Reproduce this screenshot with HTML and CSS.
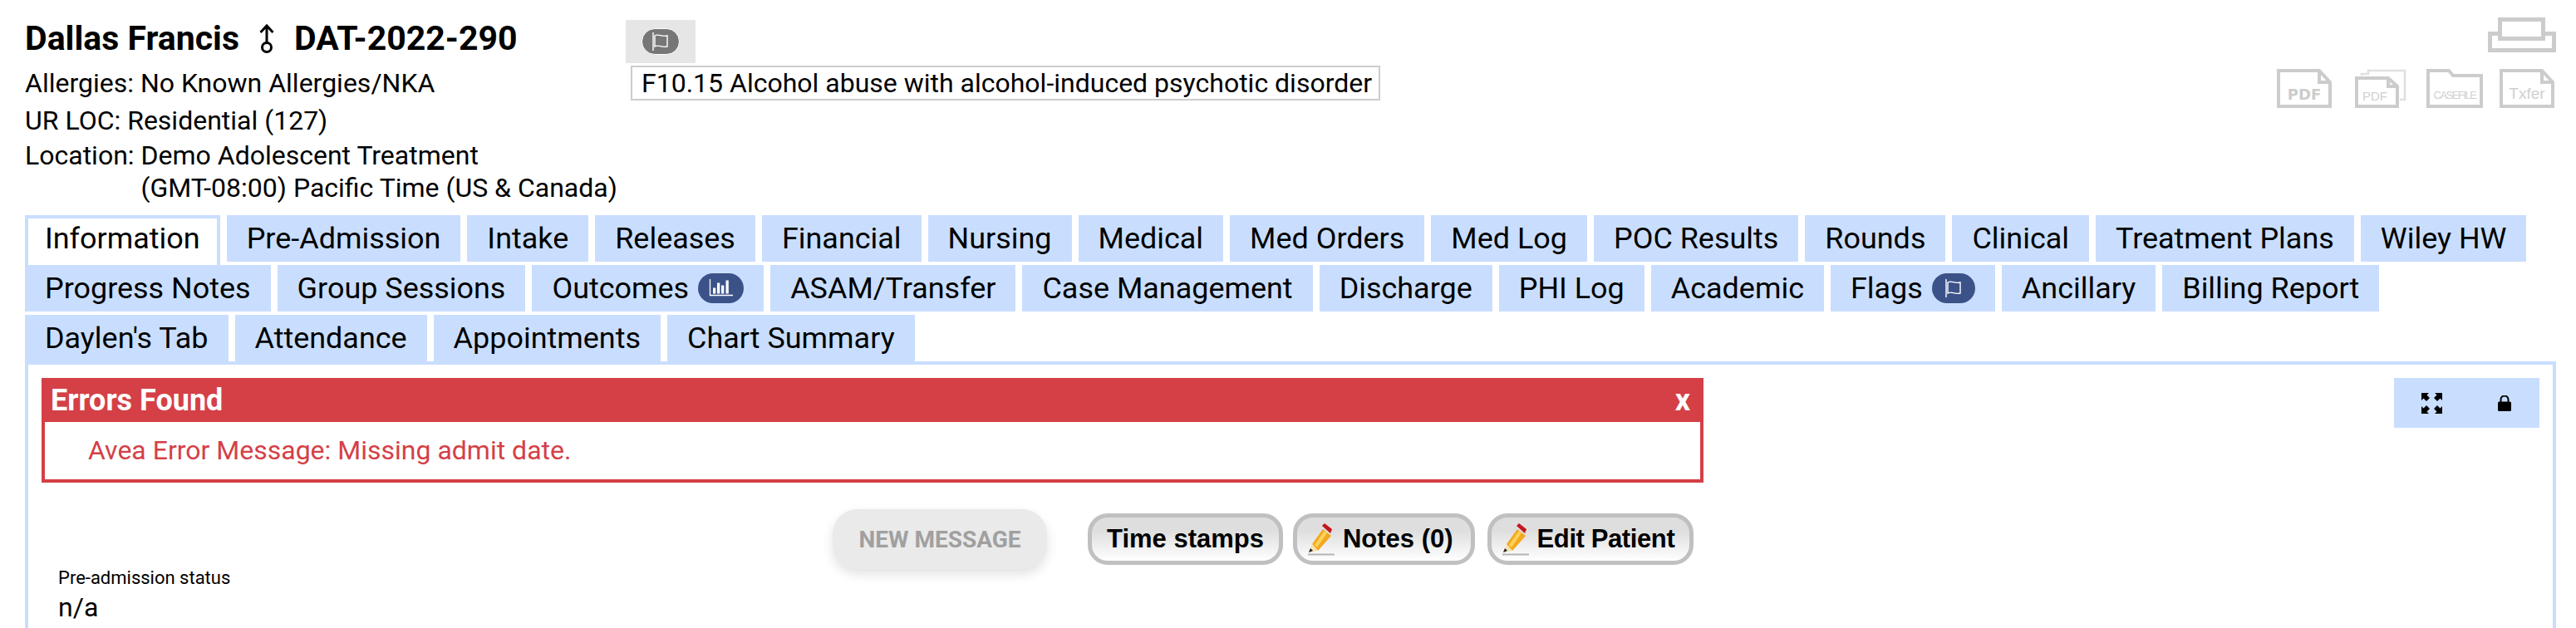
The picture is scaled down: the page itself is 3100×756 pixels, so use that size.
FILE: index.html
```html
<!DOCTYPE html>
<html>
<head>
    <title>Dallas Francis DAT-2022-290</title>
    <link rel="stylesheet" href="styles.css">
</head>
<body>

    <div class="patient-header">
        <div class="patient-info">
            <h1>Dallas Francis
                <svg class="gender" viewBox="0 0 20 36"><path d="M10 24V3M2.500 11L10 3l7.500 8" fill="none" stroke="#000" stroke-width="3"/><circle cx="10" cy="29" r="5.500" fill="none" stroke="#000" stroke-width="3"/></svg>
                DAT-2022-290</h1>
            <p>Allergies: No Known Allergies/NKA</p>
            <p>UR LOC: Residential (127)</p>
            <div class="location">
                <span class="location-label">Location:</span>
                <span>Demo Adolescent Treatment<br>(GMT-08:00) Pacific Time (US &amp; Canada)</span>
            </div>
        </div>

        <div class="flags-col">
            <div class="flag-btn">
                <span class="pill pill-grey">
                    <svg viewBox="0 0 26 26"><path d="M4 2v22M6 6c5-3 8 2 15 0v13c-7 2-10-3-15 0z" fill="none" stroke="#fff" stroke-width="1.400"/></svg>
                </span>
            </div>
            <div class="diagnosis">F10.15 Alcohol abuse with alcohol-induced psychotic disorder</div>
        </div>

        <div class="doc-icons">
            <svg class="print-icon" viewBox="0 0 82 44"><path d="M14.500 3.500h52v23h-52zM12 20.500H2.500v20h77v-20H69" fill="none" stroke="#ccc" stroke-width="5"/></svg>
            <div class="doc-row">
                <svg width="66" height="47" viewBox="0 0 66 47"><path d="M2 2h49l13 14v29H2zM51 2v14h13" fill="none" stroke="#ccc" stroke-width="4"/><text x="33" y="37" text-anchor="middle" class="doc-text doc-bold">PDF</text></svg>
                <svg class="doc-stack" width="62" height="47" viewBox="0 0 62 47"><path d="M8 8V6h8V2h44v35h-6" fill="none" stroke="#e0e0e0" stroke-width="2.500"/><path d="M2 11h38l11 10v24H2zM40 11v10h11" fill="none" stroke="#ccc" stroke-width="4"/><text x="9" y="38" class="doc-text doc-small">PDF</text></svg>
                <svg width="68" height="47" viewBox="0 0 68 47"><path d="M2 2h25l5 6h34v37H2z" fill="none" stroke="#ccc" stroke-width="4"/><text x="34" y="36" text-anchor="middle" class="doc-text doc-tiny">CASEFILE</text></svg>
                <svg class="doc-last" width="66" height="47" viewBox="0 0 66 47"><path d="M2 2h49l13 14v29H2zM51 2v14h13" fill="none" stroke="#ccc" stroke-width="4"/><text x="33" y="36" text-anchor="middle" class="doc-text doc-txfer">Txfer</text></svg>
            </div>
        </div>
    </div>

    <div class="tabs">
        <a class="tab active">Information</a>
        <a class="tab">Pre-Admission</a>
        <a class="tab">Intake</a>
        <a class="tab">Releases</a>
        <a class="tab">Financial</a>
        <a class="tab">Nursing</a>
        <a class="tab">Medical</a>
        <a class="tab">Med Orders</a>
        <a class="tab">Med Log</a>
        <a class="tab">POC Results</a>
        <a class="tab">Rounds</a>
        <a class="tab">Clinical</a>
        <a class="tab">Treatment Plans</a>
        <a class="tab">Wiley HW</a>
        <a class="tab">Progress Notes</a>
        <a class="tab">Group Sessions</a>
        <a class="tab">Outcomes
            <span class="pill pill-blue pill-wide">
                <svg class="chart" viewBox="0 0 30 22"><path d="M1.500 0v19.500H29" fill="none" stroke="#fff" stroke-width="1.300"/><path d="M5 10.500h3.300v7H5zM10 4.500h3.300v13H10zM15 7.500h3.300v10H15zM20.500 1.500h3.300v16h-3.300z" fill="#fff"/></svg>
            </span>
        </a>
        <a class="tab">ASAM/Transfer</a>
        <a class="tab">Case Management</a>
        <a class="tab">Discharge</a>
        <a class="tab">PHI Log</a>
        <a class="tab">Academic</a>
        <a class="tab">Flags
            <span class="pill pill-blue">
                <svg viewBox="0 0 26 26"><path d="M4 2v22M6 6c5-3 8 2 15 0v13c-7 2-10-3-15 0z" fill="none" stroke="#fff" stroke-width="1.400"/></svg>
            </span>
        </a>
        <a class="tab">Ancillary</a>
        <a class="tab">Billing Report</a>
        <a class="tab">Daylen's Tab</a>
        <a class="tab">Attendance</a>
        <a class="tab">Appointments</a>
        <a class="tab">Chart Summary</a>
    </div>

    <div class="panel">
        <div class="panel-top">
            <div class="error-box">
                <div class="error-title"><span>Errors Found</span><span class="error-close">x</span></div>
                <div class="error-msg">Avea Error Message: Missing admit date.</div>
            </div>
            <div class="panel-tools">
                <svg width="25" height="25" viewBox="0 0 25 25"><path d="M0 0h9L6.500 2.500 10 6 6 10 2.500 6.500 0 9zM25 0v9L22.500 6.500 19 10 15 6l3.500-3.500L16 0zM0 25v-9l2.500 2.500L6 15l4 4-3.500 3.500L9 25zM25 25h-9l2.500-2.500L15 19l4-4 3.500 3.500L25 16z"/></svg>
                <svg width="16" height="19" viewBox="0 0 16 19"><path d="M3.500 8V5a4.500 4.500 0 0 1 9 0v3" fill="none" stroke="#000" stroke-width="2"/><rect x="0" y="7.500" width="16" height="11.500" rx="1.500"/></svg>
            </div>
        </div>

        <div class="actions">
            <button class="new-message" type="button">NEW MESSAGE</button>
            <div class="action-group">
                <button class="action-btn" type="button">Time stamps</button>
                <button class="action-btn has-pencil notes-btn" type="button">
                    <svg width="32" height="42" viewBox="0 0 32 42"><path d="M0 39.500h32" stroke="#b5b5b5" stroke-width="2"/><path d="M5 27L18 9l10 8-16 18z" fill="#f4a81f"/><path d="M8 28L20 11l3 2.500L11 31z" fill="#fcd35a"/><path d="M1 37l4-10 7 8z" fill="#f7e2b0"/><path d="M1 37l2-5 3 3z" fill="#222"/><path d="M17 5l3-3 9 7-2 5z" fill="#c4161c"/></svg>
                    Notes (0)
                </button>
                <button class="action-btn has-pencil edit-btn" type="button">
                    <svg width="32" height="42" viewBox="0 0 32 42"><path d="M0 39.500h32" stroke="#b5b5b5" stroke-width="2"/><path d="M5 27L18 9l10 8-16 18z" fill="#f4a81f"/><path d="M8 28L20 11l3 2.500L11 31z" fill="#fcd35a"/><path d="M1 37l4-10 7 8z" fill="#f7e2b0"/><path d="M1 37l2-5 3 3z" fill="#222"/><path d="M17 5l3-3 9 7-2 5z" fill="#c4161c"/></svg>
                    Edit Patient
                </button>
            </div>
        </div>

        <div class="field">
            <label>Pre-admission status</label>
            <div class="field-value">n/a</div>
        </div>
    </div>

</body>
</html>
```

FILE: styles.css
```css
body {
    margin: 0;
    font-family: Roboto, sans-serif;
    font-size: 32px;
    color: #000;
    background: #fff;
    overflow: hidden;
}
p { margin: 0; }

.patient-header {
    display: flex;
    height: 259px;
    padding-left: 30px;
    box-sizing: border-box;
}
.patient-info {
    width: 723px;
    padding-top: 24px;
    font-size: 32px;
    line-height: 45px;
    white-space: nowrap;
}
.patient-info h1 {
    margin: 0 0 10px 0;
    font-size: 41px;
    line-height: 44px;
    font-weight: 700;
    display: flex;
    align-items: center;
    gap: 23px;
}
.gender { width: 20px; height: 36px; }
.location { display: flex; gap: 8px; line-height: 39px; }

.flags-col { width: 910px; padding-top: 24px; }
.flag-btn {
    width: 84px;
    height: 52px;
    background: #e6e6e6;
    display: flex;
    align-items: center;
    justify-content: center;
}
.pill {
    display: inline-flex;
    align-items: center;
    justify-content: center;
    width: 52px;
    height: 36px;
    border-radius: 18px;
    box-sizing: border-box;
}
.pill svg { width: 26px; height: 26px; }
.pill .chart { width: 30px; height: 22px; }
.pill-grey { background: #777; border: 1px solid #fff; width: 46px; height: 32px; }
.pill-blue { background: #3b5289; }
.pill-wide { width: 55px; }
.diagnosis {
    margin: 3px 0 0 6px;
    height: 42px;
    line-height: 38px;
    width: 902px;
    box-sizing: border-box;
    border: 2px solid #ccc;
    padding-left: 11px;
    font-size: 32px;
    white-space: nowrap;
}

.doc-icons {
    margin-left: auto;
    padding: 20px 26px 0 0;
    display: flex;
    flex-direction: column;
    align-items: flex-end;
}
.print-icon { width: 82px; height: 44px; margin-right: -2px; }
.doc-row { display: flex; gap: 24px; margin-top: 19px; }
.doc-stack { margin-left: 4px; }
.doc-last { margin-left: -4px; }
.doc-text { fill: #d0d0d0; font-family: "Liberation Sans", sans-serif; }
.doc-bold { font-family: "DejaVu Sans", sans-serif; font-size: 18px; font-weight: 700; fill: #ccc; }
.doc-small { font-size: 15px; }
.doc-tiny { font-size: 13px; letter-spacing: -1.500px; }
.doc-txfer { font-size: 19px; }

.tabs {
    display: flex;
    flex-wrap: wrap;
    gap: 4px 8px;
    padding: 0 40px 0 30px;
}
.tab {
    height: 56px;
    padding: 0 24px;
    background: #c9deff;
    font-size: 35.950px;
    white-space: nowrap;
    display: flex;
    align-items: center;
    gap: 11px;
    box-sizing: border-box;
}
.tab.active {
    background: #fff;
    border: 4px solid #c9deff;
    border-bottom: none;
    padding: 0 20px 8px 20px;
    height: 60px;
    margin-bottom: -4px;
    position: relative;
    z-index: 1;
}

.panel {
    margin-left: 30px;
    width: 3046px;
    height: 321px;
    box-sizing: border-box;
    border: 4px solid #c9deff;
    border-bottom: none;
    padding: 16px 16px 0 16px;
}
.panel-top { display: flex; justify-content: space-between; }
.error-box {
    width: 2000px;
    height: 126px;
    box-sizing: border-box;
    border: 4px solid #d44046;
    border-top: none;
}
.error-title {
    height: 53px;
    margin: 0 -4px;
    padding: 0 16px 0 11px;
    background: #d44046;
    color: #fff;
    font-size: 36px;
    font-weight: 700;
    display: flex;
    align-items: center;
    justify-content: space-between;
}
.error-msg {
    padding: 15px 0 0 52px;
    color: #d44046;
    font-size: 32px;
}
.panel-tools {
    width: 175px;
    height: 60px;
    background: #c9deff;
    display: flex;
    align-items: center;
    gap: 67px;
    padding-left: 33px;
    box-sizing: border-box;
}

.actions {
    display: flex;
    align-items: center;
    margin: 32px 0 0 952px;
    height: 72px;
}
button { font-family: inherit; cursor: pointer; }
.new-message {
    width: 258px;
    height: 72px;
    border: none;
    border-radius: 30px;
    background: #eaeaea;
    color: #a0a0a0;
    font-size: 28px;
    font-weight: 700;
    box-shadow: 0 6px 14px rgba(0, 0, 0, 0.12);
}
.action-group { display: flex; gap: 12px; margin-left: 49px; }
.action-btn {
    height: 62px;
    padding: 0 18px;
    border: 5px solid #c0c0c0;
    border-radius: 24px;
    background: linear-gradient(#dedede 30%, #fff);
    font-family: "Liberation Sans", sans-serif;
    font-size: 31px;
    font-weight: 700;
    display: flex;
    align-items: center;
    gap: 10px;
    white-space: nowrap;
}
.action-btn.has-pencil { padding-left: 13px; }
.action-btn.notes-btn { padding-right: 21px; margin-right: 3px; }
.action-btn.edit-btn { letter-spacing: -0.400px; }

.field { padding-left: 20px; }
.field label { display: block; font-size: 22px; line-height: 24px; margin-top: -1px; }
.field-value { font-size: 32px; line-height: 44px; margin-top: 1px; }
```
